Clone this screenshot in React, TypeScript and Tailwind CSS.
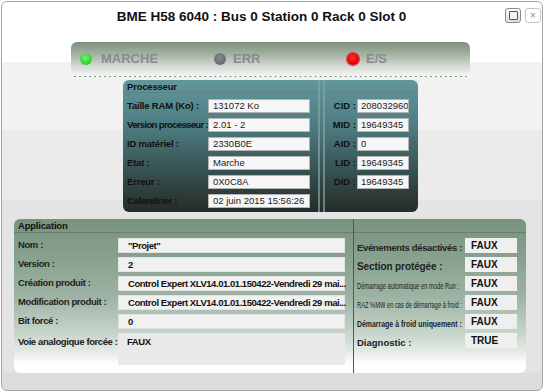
const procLeft = [
  ["Taille RAM (Ko) :", "131072 Ko"],
  ["Version processeur :", "2.01 - 2"],
  ["ID matériel :", "2330B0E"],
  ["Etat :", "Marche"],
  ["Erreur :", "0X0C8A"],
  ["Calendrier :", "02 juin 2015 15:56:26"],
];

const procRight = [
  ["CID :", "208032960"],
  ["MID :", "19649345"],
  ["AID :", "0"],
  ["LID :", "19649345"],
  ["DID :", "19649345"],
];

const appLeft = [
  ["Nom :", "\"Projet\""],
  ["Version :", "2"],
  ["Création produit :", "Control Expert XLV14.01.01.150422-Vendredi 29 mai..."],
  ["Modification produit :", "Control Expert XLV14.01.01.150422-Vendredi 29 mai..."],
  ["Bit forcé :", "0"],
  ["Voie analogique forcée :", "FAUX"],
];

// label styles differ row by row in the original (some are squeezed)
const appRight = [
  { label: "Evénements désactivés :", value: "FAUX", cls: "text-[9.5px] font-bold tracking-[-0.35px]" },
  { label: "Section protégée :", value: "FAUX", cls: "text-[10px] font-bold tracking-[-0.1px]" },
  { label: "Démarrage automatique en mode Run :", value: "FAUX", cls: "text-[8.5px] scale-x-[0.68] origin-left" },
  { label: "RAZ %MW en cas de démarrage à froid :", value: "FAUX", cls: "text-[8.5px] scale-x-[0.675] origin-left" },
  { label: "Démarrage à froid uniquement :", value: "FAUX", cls: "text-[9px] font-bold scale-x-[0.77] origin-left" },
  { label: "Diagnostic :", value: "TRUE", cls: "text-[9.5px] font-bold" },
];

function Led({ color }: { color: "green" | "gray" | "red" }) {
  const bg =
    color === "green"
      ? "bg-[radial-gradient(circle_at_45%_40%,#7af07a,#32d232_60%,#2bb82b)]"
      : color === "red"
      ? "bg-[radial-gradient(circle_at_45%_40%,#ff3030,#e80000_60%,#b01010)] ring-1 ring-[#c84040]"
      : "bg-[radial-gradient(circle_at_45%_40%,#888c8e,#6c7072_60%,#5c6062)]";
  return <span className={`block w-[12px] h-[12px] rounded-full shrink-0 ${bg}`} />;
}

export default function App() {
  return (
    <div className="w-[544px] h-[392px] p-px bg-white font-['Liberation_Sans',Arial,sans-serif] text-[#111]">
      <div className="h-full border border-[#a3a3a3] rounded-[6px] overflow-hidden flex flex-col bg-[linear-gradient(to_bottom,#fff_0,#fff_60px,#f2f2f2_60px,#f2f2f2_128px,#ebebeb_128px,#ebebeb_198px,#e4e4e4_198px,#e4e4e4_370px,#dcdcdc_371px)]">
        {/* title bar */}
        <div className="h-[40px] flex items-start shrink-0">
          <h1 className="flex-1 text-center text-[13.5px] font-bold leading-[16px] pt-[7px] pl-[16px]">
            BME H58 6040 : Bus 0 Station 0 Rack 0 Slot 0
          </h1>
          <div className="flex gap-[4px] pt-[6px] pr-[1px]">
            <button className="w-[16px] h-[15px] border border-[#8a8a8a] rounded-[3px] bg-[linear-gradient(#fdfdfd,#dedede)] flex items-center justify-center">
              <span className="block w-[9px] h-[9px] border-[1.5px] border-[#555] rounded-[1px] bg-[#f4f4f4]" />
            </button>
            <button className="w-[16px] h-[15px] border border-[#c4c4c4] rounded-[3px] bg-white flex items-center justify-center text-[10px] leading-none text-[#888]">
              ×
            </button>
          </div>
        </div>

        {/* status leds */}
        <div className="ml-[69px] w-[399px] h-[35px] shrink-0 rounded-t-[6px] border-b border-dashed border-[#fbfbfb] bg-[linear-gradient(to_bottom,#7b907c,#a2b1a2_35%,#d2d8d2_70%,#f5f6f5)] flex items-center pl-[9px] text-[13px] font-bold text-[#8a8a8a]">
          <div className="w-[134px] flex items-center gap-[9px]">
            <Led color="green" />
            MARCHE
          </div>
          <div className="w-[133px] flex items-center gap-[7px]">
            <Led color="gray" />
            ERR
          </div>
          <div className="flex items-center gap-[7px]">
            <Led color="red" />
            E/S
          </div>
        </div>

        {/* processeur */}
        <div className="mt-[3px] ml-[121px] w-[295px] h-[132px] shrink-0 rounded-[6px] overflow-hidden flex bg-[linear-gradient(to_bottom,#62979c_0%,#4d7c81_35%,#36504f_70%,#262b28_100%)]">
          <div className="w-[195px] flex flex-col">
            <div className="h-[13px] pl-[4px] text-[9.5px] font-bold leading-[13px] tracking-[-0.2px] border-b border-[#5f8487]">Processeur</div>
            <div className="pt-[6px] pl-[4px] flex flex-col gap-[5px]">
              {procLeft.map(([label, value]) => (
                <div key={label} className="h-[14px] flex items-center">
                  <span
                    className={`w-[81px] shrink-0 whitespace-nowrap text-[9.5px] font-bold ${
                      label.startsWith("Version") ? "tracking-[-0.65px]" : "tracking-[-0.2px]"
                    }`}
                  >
                    {label}
                  </span>
                  <span className="w-[102px] h-[14px] shrink-0 bg-[#f6f6f6] border border-[#b4b4b4] pl-[4px] text-[9.5px] leading-[12px] text-[#222] whitespace-nowrap overflow-hidden">
                    {value}
                  </span>
                </div>
              ))}
            </div>
          </div>
          <div className="w-[7px] shrink-0 border-x-2 border-[#86a4a5]/70" />
          <div className="flex-1 flex flex-col">
            <div className="h-[13px] border-b border-[#5f8487]" />
            <div className="pt-[6px] flex flex-col gap-[5px]">
              {procRight.map(([label, value]) => (
                <div key={label} className="h-[14px] flex items-center">
                  <span className="w-[31px] shrink-0 text-right text-[9.5px] font-bold whitespace-nowrap">{label}</span>
                  <span className="ml-[1px] w-[52px] h-[14px] shrink-0 bg-[#f6f6f6] border border-[#b4b4b4] pl-[3px] text-[9.5px] leading-[12px] text-[#222] whitespace-nowrap overflow-hidden">
                    {value}
                  </span>
                </div>
              ))}
            </div>
          </div>
        </div>

        {/* application */}
        <div className="mt-[7px] ml-[12px] w-[512px] h-[154px] shrink-0 rounded-[6px] overflow-hidden flex bg-[linear-gradient(to_bottom,#789380_0%,#849e8b_20%,#9cb2a2_50%,#c9d6cc_75%,#e6ece7_87%,#f7f9f7_92%,#fff_95%)]">
          <div className="w-[339px] flex flex-col">
            <div className="h-[14px] pl-[4px] text-[9.5px] font-bold leading-[13px] tracking-[-0.2px] border-b border-[#6c7c70]">Application</div>
            <div className="pt-[5px] pl-[4px] flex flex-col gap-[4px]">
              {appLeft.map(([label, value], i) => {
                const last = i === appLeft.length - 1;
                return (
                  <div key={label} className={`flex ${last ? "h-[32px] items-start" : "h-[15px] items-center"}`}>
                    <span className={`w-[100px] shrink-0 whitespace-nowrap text-[9.5px] font-bold tracking-[-0.4px] text-[#222] ${last ? "pt-[2px]" : ""}`}>
                      {label}
                    </span>
                    <span
                      className={`w-[227px] shrink-0 pl-[9px] text-[9.5px] font-bold tracking-[-0.45px] whitespace-nowrap ${
                        last ? "h-[32px] bg-[#e9e9e9] pt-[2px]" : "h-[15px] bg-[#f1f1f1] border border-[#e2e2e2] leading-[13px]"
                      }`}
                    >
                      {value}
                    </span>
                  </div>
                );
              })}
            </div>
          </div>
          <div className="w-px shrink-0 bg-[#555]" />
          <div className="flex-1 flex flex-col">
            <div className="h-[14px] border-b border-[#6c7c70]" />
            <div className="pt-[5px] pl-[3px] flex flex-col gap-[4px]">
              {appRight.map((r) => (
                <div key={r.label} className="h-[15px] flex items-center">
                  <span className="w-[108px] shrink-0">
                    <span className={`inline-block whitespace-nowrap text-[#222] ${r.cls}`}>{r.label}</span>
                  </span>
                  <span className="w-[52px] h-[15px] shrink-0 bg-[#efefef] pl-[6px] text-[10px] font-bold leading-[15px]">
                    {r.value}
                  </span>
                </div>
              ))}
            </div>
          </div>
        </div>
      </div>
    </div>
  );
}
